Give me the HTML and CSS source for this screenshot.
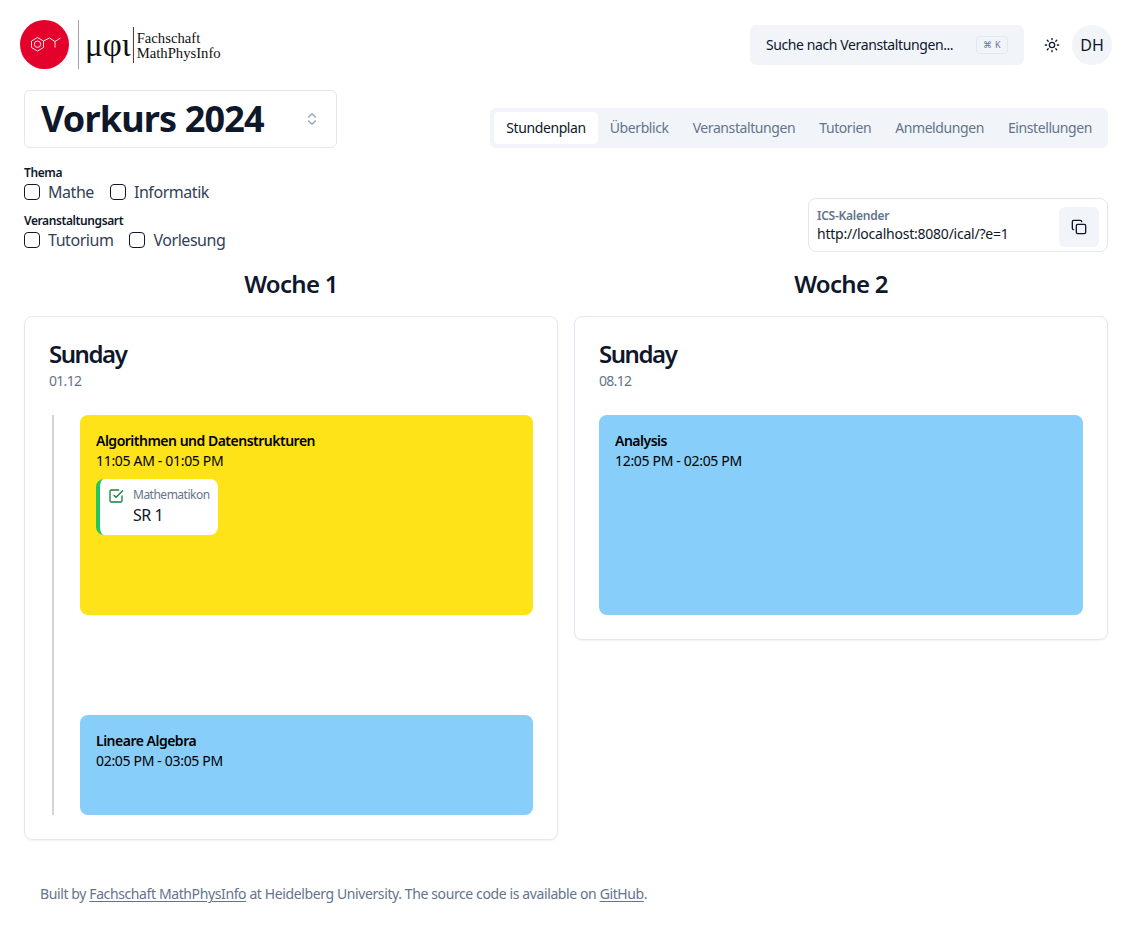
FILE: index.html
```html
<!DOCTYPE html>
<html lang="de">
<head>
<meta charset="utf-8">
<title>Vorkurs 2024</title>
<link rel="stylesheet" href="styles.css">
</head>
<body>
<header class="topbar">
  <a class="logo">
    <svg class="logo-mark" viewBox="0 0 49 49" width="49" height="49">
      <circle cx="24.5" cy="24.5" r="24.5" fill="#e4022d"/>
      <g fill="none" stroke="#fff" stroke-width="1" opacity=".9">
        <path d="M17.500 17.500l6 3.500v6.500l-6 3.500-6-3.500V21z"/>
        <circle cx="17.500" cy="24.200" r="3.200"/>
        <path d="M23.500 21l6-3 5.500 3.500v6M35 21.500l5.500-3.500"/>
      </g>
    </svg>
    <span class="logo-rule"></span>
    <span class="logo-greek">μφι</span>
    <span class="logo-red"></span>
    <span class="logo-name">Fachschaft<br>MathPhysInfo</span>
  </a>
  <div class="top-actions">
    <button class="search">
      <span>Suche nach Veranstaltungen...</span>
      <kbd class="kbd">⌘ K</kbd>
    </button>
    <svg class="sun" viewBox="0 0 24 24" width="16" height="16" fill="none" stroke="#0f172a" stroke-width="2" stroke-linecap="round" stroke-linejoin="round">
      <circle cx="12" cy="12" r="4"/>
      <path d="M12 2v2M12 20v2M4.930 4.930l1.410 1.410M17.660 17.660l1.410 1.410M2 12h2M20 12h2M6.340 17.660l-1.410 1.410M19.070 4.930l-1.410 1.410"/>
    </svg>
    <div class="avatar">DH</div>
  </div>
</header>

<main class="content">
  <div class="title-row">
    <button class="course">
      <span class="course-name">Vorkurs 2024</span>
      <svg viewBox="0 0 24 24" width="16" height="16" fill="none" stroke="#94a3b8" stroke-width="2" stroke-linecap="round" stroke-linejoin="round"><path d="m7 15 5 5 5-5M7 9l5-5 5 5"/></svg>
    </button>
    <nav class="tabs">
      <a class="tab tab-active">Stundenplan</a>
      <a class="tab">Überblick</a>
      <a class="tab">Veranstaltungen</a>
      <a class="tab">Tutorien</a>
      <a class="tab">Anmeldungen</a>
      <a class="tab">Einstellungen</a>
    </nav>
  </div>

  <div class="filter-row">
    <div class="filters">
      <div class="filter">
        <div class="filter-label">Thema</div>
        <div class="checks">
          <label class="check"><span class="box"></span>Mathe</label>
          <label class="check"><span class="box"></span>Informatik</label>
        </div>
      </div>
      <div class="filter">
        <div class="filter-label">Veranstaltungsart</div>
        <div class="checks">
          <label class="check"><span class="box"></span>Tutorium</label>
          <label class="check"><span class="box"></span>Vorlesung</label>
        </div>
      </div>
    </div>
    <div class="ics">
      <div class="ics-text">
        <div class="ics-label">ICS-Kalender</div>
        <div class="ics-url">http://localhost:8080/ical/?e=1</div>
      </div>
      <button class="copy">
        <svg viewBox="0 0 24 24" width="16" height="16" fill="none" stroke="#0f172a" stroke-width="2" stroke-linecap="round" stroke-linejoin="round"><rect x="8" y="8" width="14" height="14" rx="2"/><path d="M4 16c-1.100 0-2-.9-2-2V4c0-1.100.9-2 2-2h10c1.100 0 2 .9 2 2"/></svg>
      </button>
    </div>
  </div>

  <div class="weeks">
    <section class="week">
      <h2 class="week-title">Woche 1</h2>
      <article class="day">
        <h3 class="day-name">Sunday</h3>
        <div class="day-date">01.12</div>
        <div class="timeline">
          <div class="event event-yellow event-2h">
            <div class="event-title">Algorithmen und Datenstrukturen</div>
            <div class="event-time">11:05 AM - 01:05 PM</div>
            <div class="room">
              <svg viewBox="0 0 24 24" width="16" height="16" fill="none" stroke="#15803d" stroke-width="2" stroke-linecap="round" stroke-linejoin="round"><path d="m9 11 3 3L22 4"/><path d="M21 12v7a2 2 0 0 1-2 2H5a2 2 0 0 1-2-2V5a2 2 0 0 1 2-2h11"/></svg>
              <div>
                <div class="room-place">Mathematikon</div>
                <div class="room-name">SR 1</div>
              </div>
            </div>
          </div>
          <div class="event event-blue event-1h event-later">
            <div class="event-title">Lineare Algebra</div>
            <div class="event-time">02:05 PM - 03:05 PM</div>
          </div>
        </div>
      </article>
    </section>
    <section class="week">
      <h2 class="week-title">Woche 2</h2>
      <article class="day">
        <h3 class="day-name">Sunday</h3>
        <div class="day-date">08.12</div>
        <div class="timeline timeline-plain">
          <div class="event event-blue event-2h">
            <div class="event-title">Analysis</div>
            <div class="event-time">12:05 PM - 02:05 PM</div>
          </div>
        </div>
      </article>
    </section>
  </div>
</main>

<footer class="footer">Built by <a>Fachschaft MathPhysInfo</a> at Heidelberg University. The source code is available on <a>GitHub</a>.</footer>
</body>
</html>
```
FILE: styles.css
```css
* { box-sizing: border-box; }
html, body { margin: 0; padding: 0; }
body {
  font-family: "Noto Sans", sans-serif;
  color: #0f172a;
  background: #fff;
  font-size: 16px;
  line-height: 24px;
}
button { font: inherit; color: inherit; background: none; border: 0; padding: 0; }

.topbar {
  display: flex;
  justify-content: space-between;
  align-items: flex-start;
  padding: 20px 20px 0;
  height: 70px;
}
.logo { display: flex; align-items: center; height: 49px; color: #111; }
.logo-mark { display: block; }
.logo-rule { width: 1px; height: 49px; background: #9ca3af; margin-left: 9px; }
.logo-greek { font-family: "Liberation Serif", serif; font-size: 33px; line-height: 36px; margin-left: 6px; }
.logo-red { width: 1px; height: 36px; background: #a11f1f; margin-left: 2px; }
.logo-name { font-family: "Liberation Serif", serif; font-size: 14.700px; line-height: 15px; margin-left: 3px; padding-top: 3px; }
.top-actions { display: flex; align-items: center; margin-top: 5px; }
.search {
  display: flex; align-items: center; justify-content: space-between;
  width: 274px; height: 40px; padding: 0 16px;
  background: #f1f5f9; border-radius: 6px; font-size: 14px; letter-spacing: -.4px;
}
.kbd {
  display: inline-flex; align-items: center; height: 18px; padding: 0 6px;
  border: 1px solid #e2e8f0; border-radius: 4px; font-family: "Noto Sans", sans-serif;
  font-size: 9px; color: #64748b; letter-spacing: .5px;
}
.sun { margin-left: 20px; }
.avatar {
  width: 40px; height: 40px; border-radius: 50%; background: #f1f5f9;
  display: flex; align-items: center; justify-content: center; margin-left: 12px;
}

.content { padding: 20px 24px 0; }
.title-row { display: flex; justify-content: space-between; align-items: flex-end; }
.course {
  display: flex; align-items: center; justify-content: space-between;
  width: 313px; height: 58px; padding: 0 16px;
  border: 1px solid #e2e8f0; border-radius: 6px;
}
.course-name { font-size: 36px; line-height: 40px; font-weight: 700; letter-spacing: -.85px; }
.tabs {
  display: flex; align-items: center; height: 40px; padding: 4px;
  background: #f1f5f9; border-radius: 6px; color: #64748b; font-size: 14px; letter-spacing: -.41px;
}
.tab { display: block; padding: 0 12px; line-height: 32px; height: 32px; border-radius: 4px; }
.tab-active { background: #fff; color: #0f172a; }

.filter-row { display: flex; justify-content: space-between; align-items: flex-end; margin-top: 16px; }
.filters { display: flex; flex-direction: column; gap: 8px; }
.filter-label { height: 16px; font-size: 12px; line-height: 16px; font-weight: 600; letter-spacing: -.4px; padding-top: 1px; }
.checks { display: flex; gap: 16px; color: #334155; }
.check { display: flex; align-items: center; gap: 8px; line-height: 24px; letter-spacing: -.45px; }
.box { width: 16px; height: 16px; border: 1px solid #0f172a; border-radius: 4px; display: block; }
.ics {
  width: 300px; height: 54px; display: flex; align-items: flex-start; justify-content: space-between;
  padding: 8px 8px 0; border: 1px solid #e2e8f0; border-radius: 8px;
}
.ics-text { padding-top: 1px; }
.ics-label { font-size: 12px; line-height: 16px; font-weight: 600; color: #64748b; letter-spacing: -.25px; }
.ics-url { font-size: 14px; line-height: 20px; letter-spacing: -.23px; }
.copy {
  width: 40px; height: 40px; background: #f1f5f9; border-radius: 6px;
  display: flex; align-items: center; justify-content: center;
}

.weeks { display: grid; grid-template-columns: 1fr 1fr; gap: 16px; margin-top: 16px; align-items: start; }
.week-title { margin: 0 0 16px; text-align: center; font-size: 24px; line-height: 32px; font-weight: 600; letter-spacing: -.7px; }
.day {
  border: 1px solid #e2e8f0; border-radius: 8px; padding: 24px;
  box-shadow: 0 1px 2px rgba(0,0,0,.05);
}
.day-name { margin: 0; font-size: 24px; line-height: 26px; font-weight: 600; letter-spacing: -1.450px; }
.day-date { font-size: 14px; line-height: 20px; color: #64748b; margin-top: 4px; letter-spacing: -.7px; }
.timeline { margin-top: 24px; padding-left: 31px; position: relative; }
.timeline::before {
  content: ""; position: absolute; left: 3px; top: 0; bottom: 0; width: 2px; background: #d1d5db;
}
.timeline-plain { padding-left: 0; }
.timeline-plain::before { display: none; }
.event { border-radius: 8px; padding: 16px 16px; color: #000; }
.event-2h { height: 200px; }
.event-1h { height: 100px; }
.event-later { margin-top: 100px; }
.event-yellow { background: #fee318; }
.event-blue { background: #87cefa; }
.event-title { font-size: 14px; line-height: 20px; font-weight: 600; letter-spacing: -.5px; }
.event-time { font-size: 14px; line-height: 20px; letter-spacing: -.32px; }
.room {
  display: inline-flex; gap: 9px; height: 56px; margin: 8px 0 0; padding: 8px 8px 0 8px;
  background: #fff; border-left: 4px solid #22c55e; border-radius: 8px;
}
.room svg { margin-top: 1px; }
.room-place { font-size: 12px; line-height: 16px; color: #64748b; letter-spacing: -.5px; }
.room-name { font-size: 16px; line-height: 24px; color: #0f172a; letter-spacing: -.5px; }

.footer { margin-top: 44px; padding: 0 40px; font-size: 14px; line-height: 20px; color: #64748b; letter-spacing: -.39px; }
.footer a { text-decoration: underline; text-underline-offset: 2px; }
```
